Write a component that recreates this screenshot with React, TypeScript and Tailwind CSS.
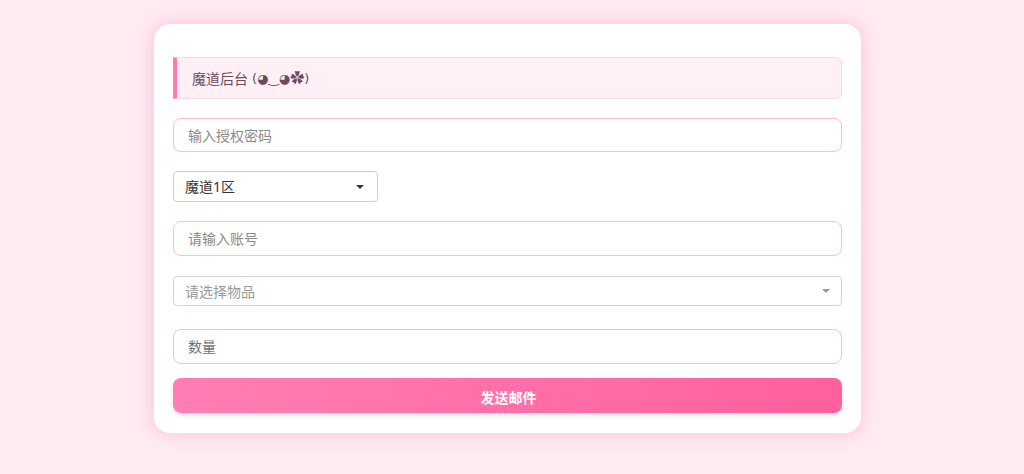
import React from "react";

const font = { fontFamily: '"Noto Sans", "Noto Sans CJK SC", sans-serif' };

export default function App() {
  return (
    <div className="min-h-[474px] w-full bg-[#ffebf2] flex justify-center pt-[24px] pr-[9px]" style={font}>
      <div className="w-[707px] h-[409px] bg-white rounded-[16px] shadow-[0_0_14px_4px_rgba(255,182,206,0.55)] px-[19px] pt-[33px]">
        <div className="h-[42px] bg-[#fff0f6] border border-[#f3dbe5] border-l-[4px] border-l-[#ff7ab3] rounded-r-[6px] flex items-center pl-[15px] text-[14px] text-[#6e4a60]">
          <span>魔道后台</span>
          <span className="ml-[4px] font-['DejaVu_Sans',sans-serif] text-[13px]">(◕‿◕<span className="font-['Noto_Sans_CJK_SC',sans-serif] text-[14px]">✿</span>)</span>
        </div>
        <div className="mt-[19px] h-[34px] border border-[#ffbcd3] rounded-[8px] flex items-center pl-[14px] text-[14px] text-[#8a8a8a]">
          输入授权密码
        </div>
        <div className="mt-[19px] w-[205px] h-[31px] border border-[#cfcfcf] rounded-[4px] flex items-center justify-between pl-[11px] pr-[13px] text-[14px] text-[#333]">
          <span>魔道1区</span>
          <svg width="8" height="4" viewBox="0 0 8 4"><path d="M0 0h8L4 4z" fill="#333" /></svg>
        </div>
        <div className="mt-[19px] h-[35px] border border-[#ffbcd3] rounded-[8px] flex items-center pl-[14px] text-[14px] text-[#8a8a8a]">
          请输入账号
        </div>
        <div className="mt-[20px] h-[30px] border border-[#d4d4d4] rounded-[4px] flex items-center justify-between pl-[11px] pr-[11px] text-[14px] text-[#999]">
          <span>请选择物品</span>
          <svg width="8" height="4" viewBox="0 0 8 4"><path d="M0 0h8L4 4z" fill="#999" /></svg>
        </div>
        <div className="mt-[23px] h-[35px] border border-[#ffbcd3] rounded-[8px] flex items-center pl-[14px] text-[14px] text-[#707070]">
          数量
        </div>
        <div className="mt-[14px] h-[35px] rounded-[8px] bg-gradient-to-r from-[#ff7eb5] to-[#ff5f9d] shadow-[0_2px_5px_rgba(0,0,0,0.12)] flex items-center justify-center pt-[4px] pl-[2px] text-[14px] font-bold text-white">
          发送邮件
        </div>
      </div>
    </div>
  );
}
